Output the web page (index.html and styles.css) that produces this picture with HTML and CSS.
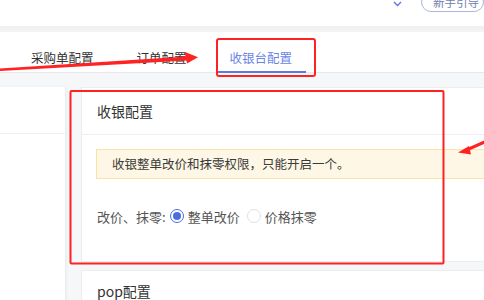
FILE: index.html
```html
<!DOCTYPE html>
<html lang="zh-CN">
<head>
    <meta charset="UTF-8">
    <meta name="viewport" content="width=device-width, initial-scale=1.0">
    <title>收银台配置</title>
    <link rel="stylesheet" href="styles.css">
</head>
<body>

    <!-- Top header -->
    <header class="topbar">
        <svg class="chevron" width="9" height="6" viewBox="0 0 9 6">
            <path d="M1 1 L4.5 4.5 L8 1" fill="none" stroke="#5b7be0" stroke-width="1.4"/>
        </svg>
        <button class="guide">新手引导</button>
    </header>
    <div class="band"></div>

    <!-- Tabs -->
    <nav class="tabs">
        <div class="tab">采购单配置</div>
        <div class="tab">订单配置</div>
        <div class="tab active">收银台配置</div>
    </nav>

    <!-- Content -->
    <main class="content">
        <aside class="side">
            <div class="side-head"></div>
        </aside>

        <section class="main">
            <div class="card">
                <div class="card-head">收银配置</div>
                <div class="card-body">
                    <div class="alert">收银整单改价和抹零权限，只能开启一个。</div>
                    <div class="form-row">
                        <span class="label">改价、抹零:</span>
                        <label class="radio checked"><span class="dot"></span>整单改价</label>
                        <label class="radio"><span class="dot"></span>价格抹零</label>
                    </div>
                </div>
            </div>

            <div class="card">
                <div class="card-head short">pop配置</div>
            </div>
        </section>
    </main>

    <!-- Red annotations drawn over the page -->
    <svg class="marks" width="484" height="300" viewBox="0 0 484 300">
        <rect x="217" y="39" width="98" height="37" rx="2" fill="none" stroke="#ff2222" stroke-width="2"/>
        <rect x="70.5" y="91" width="373" height="172.5" rx="1" fill="none" stroke="#ff2222" stroke-width="2"/>
        <polygon points="0,68.6 0,71 187,60.6 186.5,56.6" fill="#ff2222"/>
        <polygon points="198,57.3 184.5,51.8 187,63.6" fill="#ff2222"/>
        <polygon points="484,140.5 484,144 467,151.6 466,148.4" fill="#ff2222"/>
        <polygon points="458,152.5 469,146 471,154.5" fill="#ff2222"/>
    </svg>

</body>
</html>
```

FILE: styles.css
```css
* {
    margin: 0;
    padding: 0;
    box-sizing: border-box;
}

body {
    width: 484px;
    height: 300px;
    overflow: hidden;
    position: relative;
    font-family: "Noto Sans CJK SC", "Noto Sans", sans-serif;
    color: #333;
    background-color: #f6f7f9;
}

/* Header */
.topbar {
    height: 26px;
    display: flex;
    justify-content: flex-end;
    align-items: flex-start;
    background-color: #fff;
}

.chevron {
    margin-top: 1px;
    margin-right: 19px;
}

.guide {
    height: 20px;
    margin-top: -8px;
    padding: 0 4px 0 11px;
    font-family: inherit;
    font-size: 11.5px;
    line-height: 18px;
    color: #6f7fae;
    background: #fff;
    border: 1px solid #a9b7df;
    border-radius: 10px;
}

.band {
    height: 6px;
    background: linear-gradient(#eeeff1, #f4f5f7);
}

/* Tabs */
.tabs {
    height: 41px;
    display: flex;
    align-items: flex-end;
    gap: 15px;
    padding-left: 17px;
    background-color: #fff;
    border-bottom: 1px solid #e6e8eb;
}

.tab {
    height: 41px;
    margin-bottom: -1px;
    padding: 17px 14px 0;
    font-size: 12.5px;
    line-height: 18px;
    color: #333;
    border-bottom: 2px solid transparent;
}

.tab.active {
    color: #6a84e6;
    border-bottom-color: #5b7be0;
}

/* Content */
.content {
    display: flex;
    gap: 15px;
    padding-top: 14px;
}

.side {
    width: 66px;
    height: 220px;
    flex-shrink: 0;
    background-color: #fff;
    border-right: 1px solid #ebedf0;
    box-shadow: 1px 0 3px rgba(0, 0, 0, 0.04);
}

.side-head {
    height: 47px;
    border-bottom: 1px solid #eeeff2;
}

.main {
    width: 430px;
    flex-shrink: 0;
    display: flex;
    flex-direction: column;
    gap: 8px;
}

.card {
    background-color: #fff;
    border: 1px solid #ebedf0;
}

.card-head {
    height: 47px;
    padding-left: 15px;
    font-size: 14px;
    line-height: 46px;
    color: #333;
    border-bottom: 1px solid #eeeff2;
}

.card-head.short {
    line-height: 40px;
}

.card-body {
    padding: 14px 14px 35px;
}

.alert {
    height: 30px;
    padding-left: 15px;
    font-size: 12.5px;
    line-height: 28px;
    color: #3a3a3a;
    background-color: #fef7e5;
    border: 1px solid #fbe3a4;
}

.form-row {
    display: flex;
    align-items: center;
    height: 20px;
    margin-top: 27px;
    padding-left: 1px;
    font-size: 13px;
    color: #555;
}

.label {
    margin-right: 4px;
}

.radio {
    display: flex;
    align-items: center;
    gap: 4px;
    margin-right: 7px;
}

.dot {
    width: 14px;
    height: 14px;
    border-radius: 50%;
    border: 1px solid #dcdfe6;
    background-color: #fff;
    position: relative;
}

.radio.checked .dot {
    border-color: #4a6fdc;
}

.radio.checked .dot::after {
    content: "";
    position: absolute;
    left: 2px;
    top: 2px;
    width: 8px;
    height: 8px;
    border-radius: 50%;
    background-color: #4a6fdc;
}

/* Annotation layer */
.marks {
    position: absolute;
    left: 0;
    top: 0;
    pointer-events: none;
}
```
